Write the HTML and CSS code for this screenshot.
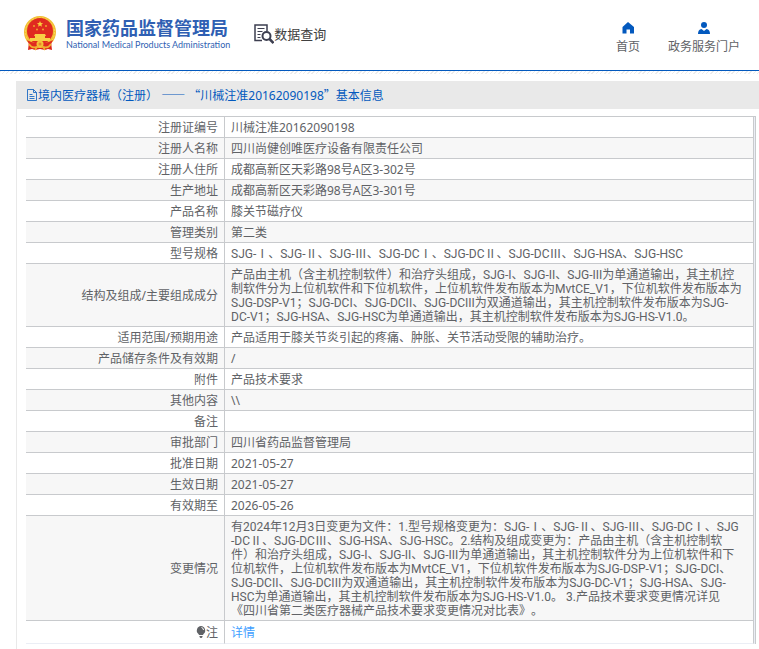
FILE: index.html
```
<!DOCTYPE html>
<html lang="zh-CN">
<head>
    <meta charset="UTF-8">
    <meta name="viewport" content="width=device-width, initial-scale=1.0">
    <title>国家药品监督管理局 数据查询</title>
    <link rel="stylesheet" href="styles.css">
</head>
<body>
    <header class="header">
        <a class="logo" href="#">
            <svg class="emblem" viewBox="0 0 32 35" aria-hidden="true">
                <path d="M5 26 L4 34 L8 33 L11 34 L16 33 L21 34 L24 33 L28 34 L27 26 Z" fill="#dc2418"/>
                <circle cx="16" cy="16" r="16" fill="#f2bd32"/>
                <circle cx="16" cy="16" r="14.5" fill="none" stroke="#f9d75a" stroke-width="1" stroke-dasharray="2 1.5"/>
                <circle cx="16" cy="15" r="13" fill="#e02a20"/>
                <path d="M16 5 l.9 2 2.2.2 -1.7 1.4 .5 2.1 -1.9-1.1 -1.9 1.1 .5-2.1 -1.7-1.4 2.2-.2z" fill="#f8d03c"/>
                <g fill="#f0a52c">
                    <circle cx="10" cy="10" r="1"/>
                    <circle cx="22" cy="10" r="1"/>
                    <circle cx="13" cy="13.500" r="1"/>
                    <circle cx="19" cy="13.500" r="1"/>
                </g>
                <path d="M11 18 h10 l1 2 h-1 v2 h5 v3 h-20 v-3 h5 v-2 h-1z" fill="#f8cf45"/>
                <path d="M3 24 Q9 28 16 26 Q23 28 29 24 L26 30 Q21 32 16 29 Q11 32 6 30Z" fill="#e02a20"/>
                <circle cx="16" cy="28" r="3.500" fill="#f5c238"/>
                <circle cx="16" cy="28" r="1.500" fill="#e8862a"/>
                <path d="M5 28 Q8 33 13 31 L11 34 M27 28 Q24 33 19 31 L21 34" fill="none" stroke="#f0b030" stroke-width="1.500"/>
            </svg>
            <span class="logo-text">
                <strong>国家药品监督管理局</strong>
                <span class="logo-en">National Medical Products Administration</span>
            </span>
        </a>
        <a class="search-title" href="#">
            <svg width="20" height="20" viewBox="0 0 20 20" fill="none" stroke="#3d3f50" aria-hidden="true">
                <path d="M8 16.500H1V1h12v6" stroke-width="1.500"/>
                <path d="M3.500 4.500h7M3.500 7.500h5M3.500 10.500h3M3.500 13.500h3" stroke-width="1"/>
                <circle cx="12.500" cy="12" r="4" stroke-width="2"/>
                <path d="M15.500 15l4 4" stroke-width="2.500"/>
            </svg>
            <span>数据查询</span>
        </a>
        <nav class="nav">
            <a href="#">
                <svg width="12" height="12" viewBox="0 0 12 12" aria-hidden="true">
                    <path d="M6 0 L12 5 V11.500 H8 V7.500 H4.500 V11.500 H0.500 V5 Z" fill="#0359be"/>
                </svg>
                首页
            </a>
            <a href="#">
                <svg width="12" height="12" viewBox="0 0 12 12" aria-hidden="true">
                    <circle cx="6" cy="3" r="3" fill="#0359be"/>
                    <path d="M0 12 Q0 7.500 3.500 7 L6 9 L8.500 7 Q12 7.500 12 12Z" fill="#0359be"/>
                </svg>
                政务服务门户
            </a>
        </nav>
    </header>

    <main class="panel">
        <h1 class="panel-title">
            <svg width="12" height="12" viewBox="0 0 12 12" fill="none" stroke="#0359be" aria-hidden="true">
                <path d="M1.500 .5h6l3 3v8h-9z M7.500 .5v3h3 M3.500 5.500h3 M3.500 7.500h5 M3.500 9.500h5" stroke-width=".8"/>
            </svg>
            <span>境内医疗器械（注册） <span class="cjk">——</span> <span class="cjk">“</span>川械注准20162090198<span class="cjk">”</span>基本信息</span>
        </h1>

        <div class="panel-body">
            <table class="info">
                <tr><th scope="row">注册证编号</th><td>川械注准20162090198</td></tr>
                <tr><th scope="row">注册人名称</th><td>四川尚健创唯医疗设备有限责任公司</td></tr>
                <tr><th scope="row">注册人住所</th><td>成都高新区天彩路98号A区3-302号</td></tr>
                <tr><th scope="row">生产地址</th><td>成都高新区天彩路98号A区3-301号</td></tr>
                <tr><th scope="row">产品名称</th><td>膝关节磁疗仪</td></tr>
                <tr><th scope="row">管理类别</th><td>第二类</td></tr>
                <tr><th scope="row">型号规格</th><td class="models">SJG-Ⅰ、SJG-Ⅱ、SJG-Ⅲ、SJG-DCⅠ、SJG-DCⅡ、SJG-DCⅢ、SJG-HSA、SJG-HSC</td></tr>
                <tr>
                    <th scope="row">结构及组成/主要组成成分</th>
                    <td class="models">产品由主机（含主机控制软件）和治疗头组成，SJG-I、SJG-II、SJG-III为单通道输出，其主机控<br>制软件分为上位机软件和下位机软件，上位机软件发布版本为MvtCE_V1，下位机软件发布版本为<br>SJG-DSP-V1；SJG-DCI、SJG-DCII、SJG-DCIII为双通道输出，其主机控制软件发布版本为SJG-<br>DC-V1；SJG-HSA、SJG-HSC为单通道输出，其主机控制软件发布版本为SJG-HS-V1.0。</td>
                </tr>
                <tr><th scope="row">适用范围/预期用途</th><td>产品适用于膝关节炎引起的疼痛、肿胀、关节活动受限的辅助治疗。</td></tr>
                <tr><th scope="row">产品储存条件及有效期</th><td>/</td></tr>
                <tr><th scope="row">附件</th><td>产品技术要求</td></tr>
                <tr><th scope="row">其他内容</th><td>\\</td></tr>
                <tr><th scope="row">备注</th><td></td></tr>
                <tr><th scope="row">审批部门</th><td>四川省药品监督管理局</td></tr>
                <tr><th scope="row">批准日期</th><td>2021-05-27</td></tr>
                <tr><th scope="row">生效日期</th><td>2021-05-27</td></tr>
                <tr><th scope="row">有效期至</th><td>2026-05-26</td></tr>
                <tr>
                    <th scope="row">变更情况</th>
                    <td class="models">有2024年12月3日变更为文件：1.型号规格变更为：SJG-Ⅰ、SJG-Ⅱ、SJG-Ⅲ、SJG-DCⅠ、SJG<br>-DCⅡ、SJG-DCⅢ、SJG-HSA、SJG-HSC。2.结构及组成变更为：产品由主机（含主机控制软<br>件）和治疗头组成，SJG-I、SJG-II、SJG-III为单通道输出，其主机控制软件分为上位机软件和下<br>位机软件，上位机软件发布版本为MvtCE_V1，下位机软件发布版本为SJG-DSP-V1；SJG-DCI、<br>SJG-DCII、SJG-DCIII为双通道输出，其主机控制软件发布版本为SJG-DC-V1；SJG-HSA、SJG-<br>HSC为单通道输出，其主机控制软件发布版本为SJG-HS-V1.0。 3.产品技术要求变更情况详见<br>《四川省第二类医疗器械产品技术要求变更情况对比表》。</td>
                </tr>
                <tr class="note">
                    <th scope="row">
                        <svg width="10" height="12" viewBox="0 0 10 12" aria-hidden="true">
                            <path d="M5 0a4.500 4.500 0 0 1 2.500 8L7 9H3L2.500 8A4.500 4.500 0 0 1 5 0Z M3.500 10h3v1l-1 1h-1l-1-1z" fill="#606266"/>
                            <path d="M5.500 1.500q2 .5 2 2.500" fill="none" stroke="#fff"/>
                        </svg>注</th>
                    <td><a href="#">详情</a></td>
                </tr>
            </table>
        </div>
    </main>
</body>
</html>
```
FILE: styles.css
```
* {
    box-sizing: border-box;
}

body {
    margin: 0;
    background: #fff;
    color: #606266;
    font-family: "Noto Sans", "Noto Sans CJK SC", sans-serif;
    font-size: 12px;
    line-height: 14px;
    text-spacing-trim: space-all;
}

a {
    color: inherit;
    text-decoration: none;
}

.cjk {
    font-family: "Noto Sans CJK SC", sans-serif;
}

/* Header */
.header {
    display: flex;
    align-items: center;
    height: 71px;
    padding: 0 19px 4px 24px;
    border-bottom: 1px solid #0359be;
}

/* faint hatching under the header line */
.header::after {
    content: "";
    position: absolute;
    top: 71px;
    left: 0;
    right: 0;
    height: 3px;
    background: repeating-linear-gradient(135deg, #ececec 0 1px, #fff 1px 3px);
}

.logo {
    display: flex;
    align-items: center;
    gap: 10px;
    color: #2f5fb3;
}

.emblem {
    width: 32px;
    height: 35px;
}

.logo-text {
    display: flex;
    flex-direction: column;
    padding-top: 4px;
    white-space: nowrap;
}

.logo-text strong {
    font-size: 18px;
    line-height: 20px;
}

.logo-en {
    font-family: Lato, sans-serif;
    font-size: 9px;
    line-height: 14px;
}

.search-title {
    display: flex;
    align-items: center;
    margin-left: 24px;
    padding-top: 2px;
    color: #404040;
    font-size: 13px;
}

.nav {
    display: flex;
    gap: 28px;
    margin-left: auto;
    padding-top: 10px;
}

.nav a {
    display: flex;
    flex-direction: column;
    align-items: center;
    gap: 6px;
}

/* Detail panel */
.panel {
    margin: 10px 0 0 16px;
}

.panel-title {
    display: flex;
    align-items: center;
    height: 28px;
    margin: 0;
    padding: 0 10px;
    background: #e9e9e9;
    color: #0359be;
    font-size: 12px;
    font-weight: normal;
}

.panel-body {
    padding: 7px 3px 6px 9px;
    border-left: 1px solid #e9e9e9;
}

.info {
    width: 100%;
    table-layout: fixed;
    border-spacing: 0;
    border-top: 1px solid #c8cacd;
    border-right: 1px solid #c8cacd;
    padding-right: 1px;
    background: #ebeef5;
}

.info th,
.info td {
    padding: 4px 6px 2px;
    border-right: 1px solid #c8cacd;
    border-bottom: 1px solid #c8cacd;
    background: #fff;
    font-weight: normal;
    vertical-align: middle;
}

.info th {
    width: 199px;
    text-align: right;
}

.info td {
    height: 21px;
    white-space: nowrap;
}

.info .models {
    font-family: Roboto, "Noto Sans CJK SC", sans-serif;
}

.info tr:nth-child(even) th,
.info tr:nth-child(even) td {
    background: #f7f7f7;
}

.info .note th,
.info .note td {
    padding: 5px 6px 3px;
    border-bottom-color: #ebeef5;
}

.note svg {
    vertical-align: -1px;
}

.note a {
    color: #409eff;
}
```
